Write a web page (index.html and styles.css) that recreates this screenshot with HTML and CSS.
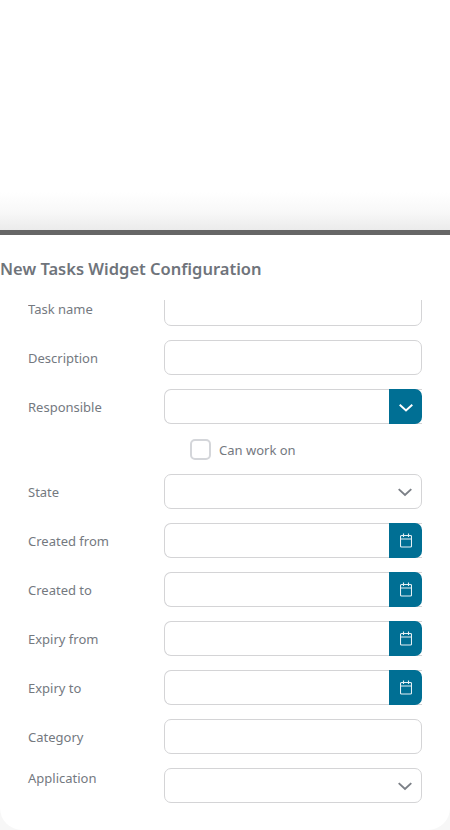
FILE: index.html
```html
<!DOCTYPE html>
<html lang="en">
<head>
<meta charset="utf-8">
<title>New Tasks Widget Configuration</title>
<link rel="stylesheet" href="styles.css">
</head>
<body>
<div class="backdrop"></div>
<section class="panel">
  <h1 class="title">New Tasks Widget Configuration</h1>
  <div class="form">
    <div class="scroll-clip">
      <div class="row row-first"><label class="label">Task name</label><div class="field"></div></div>
    </div>
    <div class="row"><label class="label">Description</label><div class="field"></div></div>
    <div class="row"><label class="label">Responsible</label>
      <div class="field field-btn"><span class="btn"><svg class="ico" viewBox="0 0 14 14"><path d="M1.500 5.100 7 10.100l5.500-5" fill="none" stroke="#fff" stroke-width="1.700"/></svg></span></div></div>
    <div class="check-row"><span class="check"></span><span class="check-label">Can work on</span></div>
    <div class="row"><label class="label">State</label>
      <div class="field field-select"><svg class="ico" viewBox="0 0 14 14"><path d="M1.500 4.500 7 9.500l5.500-5" fill="none" stroke="#7c8087" stroke-width="1.700"/></svg></div></div>
    <div class="row"><label class="label">Created from</label>
      <div class="field field-btn"><span class="btn"><svg class="cal" viewBox="0 0 12 15"><path d="M1.500 2.500h9a1 1 0 0 1 1 1v9.500a1 1 0 0 1-1 1h-9a1 1 0 0 1-1-1V3.500a1 1 0 0 1 1-1ZM.5 6h11M3.500 .5v3.500M8.500 .5v3.500" fill="none" stroke="#e6f0f4" stroke-width="1.100"/></svg></span></div></div>
    <div class="row"><label class="label">Created to</label>
      <div class="field field-btn"><span class="btn"><svg class="cal" viewBox="0 0 12 15"><path d="M1.500 2.500h9a1 1 0 0 1 1 1v9.500a1 1 0 0 1-1 1h-9a1 1 0 0 1-1-1V3.500a1 1 0 0 1 1-1ZM.5 6h11M3.500 .5v3.500M8.500 .5v3.500" fill="none" stroke="#e6f0f4" stroke-width="1.100"/></svg></span></div></div>
    <div class="row"><label class="label">Expiry from</label>
      <div class="field field-btn"><span class="btn"><svg class="cal" viewBox="0 0 12 15"><path d="M1.500 2.500h9a1 1 0 0 1 1 1v9.500a1 1 0 0 1-1 1h-9a1 1 0 0 1-1-1V3.500a1 1 0 0 1 1-1ZM.5 6h11M3.500 .5v3.500M8.500 .5v3.500" fill="none" stroke="#e6f0f4" stroke-width="1.100"/></svg></span></div></div>
    <div class="row"><label class="label">Expiry to</label>
      <div class="field field-btn"><span class="btn"><svg class="cal" viewBox="0 0 12 15"><path d="M1.500 2.500h9a1 1 0 0 1 1 1v9.500a1 1 0 0 1-1 1h-9a1 1 0 0 1-1-1V3.500a1 1 0 0 1 1-1ZM.5 6h11M3.500 .5v3.500M8.500 .5v3.500" fill="none" stroke="#e6f0f4" stroke-width="1.100"/></svg></span></div></div>
    <div class="row"><label class="label">Category</label><div class="field"></div></div>
    <div class="row row-top"><label class="label">Application</label>
      <div class="field field-select"><svg class="ico" viewBox="0 0 14 14"><path d="M1.500 4.500 7 9.500l5.500-5" fill="none" stroke="#7c8087" stroke-width="1.700"/></svg></div></div>
  </div>
</section>
</body>
</html>
```
FILE: styles.css
```css
* { box-sizing: border-box; }
html, body { margin: 0; padding: 0; }
body {
  width: 450px;
  height: 830px;
  overflow: hidden;
  background: #f7f7f7;
  font-family: "Noto Sans", "Open Sans", sans-serif;
}
.backdrop {
  height: 230px;
  background: linear-gradient(to bottom, #fff 0, #fff 192px, #f8f8f8 212px, #ebebeb 230px);
}
.panel {
  height: 600px;
  background: #fff;
  border-top: 5px solid #666;
  border-radius: 0 0 22px 22px;
}
.title {
  margin: 0;
  padding: 23px 0 0 0;
  height: 65px;
  font-size: 16.5px;
  line-height: 22px;
  font-weight: 600;
  color: #6f747b;
}
.form { display: flex; flex-direction: column; padding-left: 28px; padding-right: 28px; }
.scroll-clip { height: 26px; overflow: hidden; margin-bottom: 14px; }
.row-first { margin-top: -9px; }
.row { display: flex; align-items: center; height: 35px; margin-bottom: 14px; flex: none; }
.scroll-clip .row { margin-bottom: 0; }
.row-top { align-items: flex-start; }
.row-top .label { line-height: 20px; }
.label {
  width: 136px;
  flex: none;
  font-size: 13px;
  color: #74797f;
}
.field {
  width: 258px;
  height: 35px;
  flex: none;
  background: #fff;
  border: 1px solid #d4d4d6;
  border-radius: 7px;
  display: flex;
  align-items: center;
  justify-content: flex-end;
}
.field-btn { border-right: 0; border-radius: 7px 0 0 7px; }
.field-select { padding-right: 8px; }
.btn {
  width: 33px;
  height: 35px;
  margin: -1px 0;
  background: #006f94;
  border-radius: 0 7px 7px 0;
  display: flex;
  align-items: center;
  justify-content: center;
}
.ico { width: 16px; height: 16px; display: block; }
.cal { width: 12px; height: 15px; display: block; }
.check-row {
  display: flex;
  align-items: center;
  gap: 8px;
  height: 22px;
  margin: 0 0 14px 162px;
  flex: none;
}
.check {
  width: 21px;
  height: 21px;
  border: 2px solid #d4d6da;
  border-radius: 5px;
  background: #fff;
}
.check-label { font-size: 13px; color: #74797f; padding-top: 1px; }
```
